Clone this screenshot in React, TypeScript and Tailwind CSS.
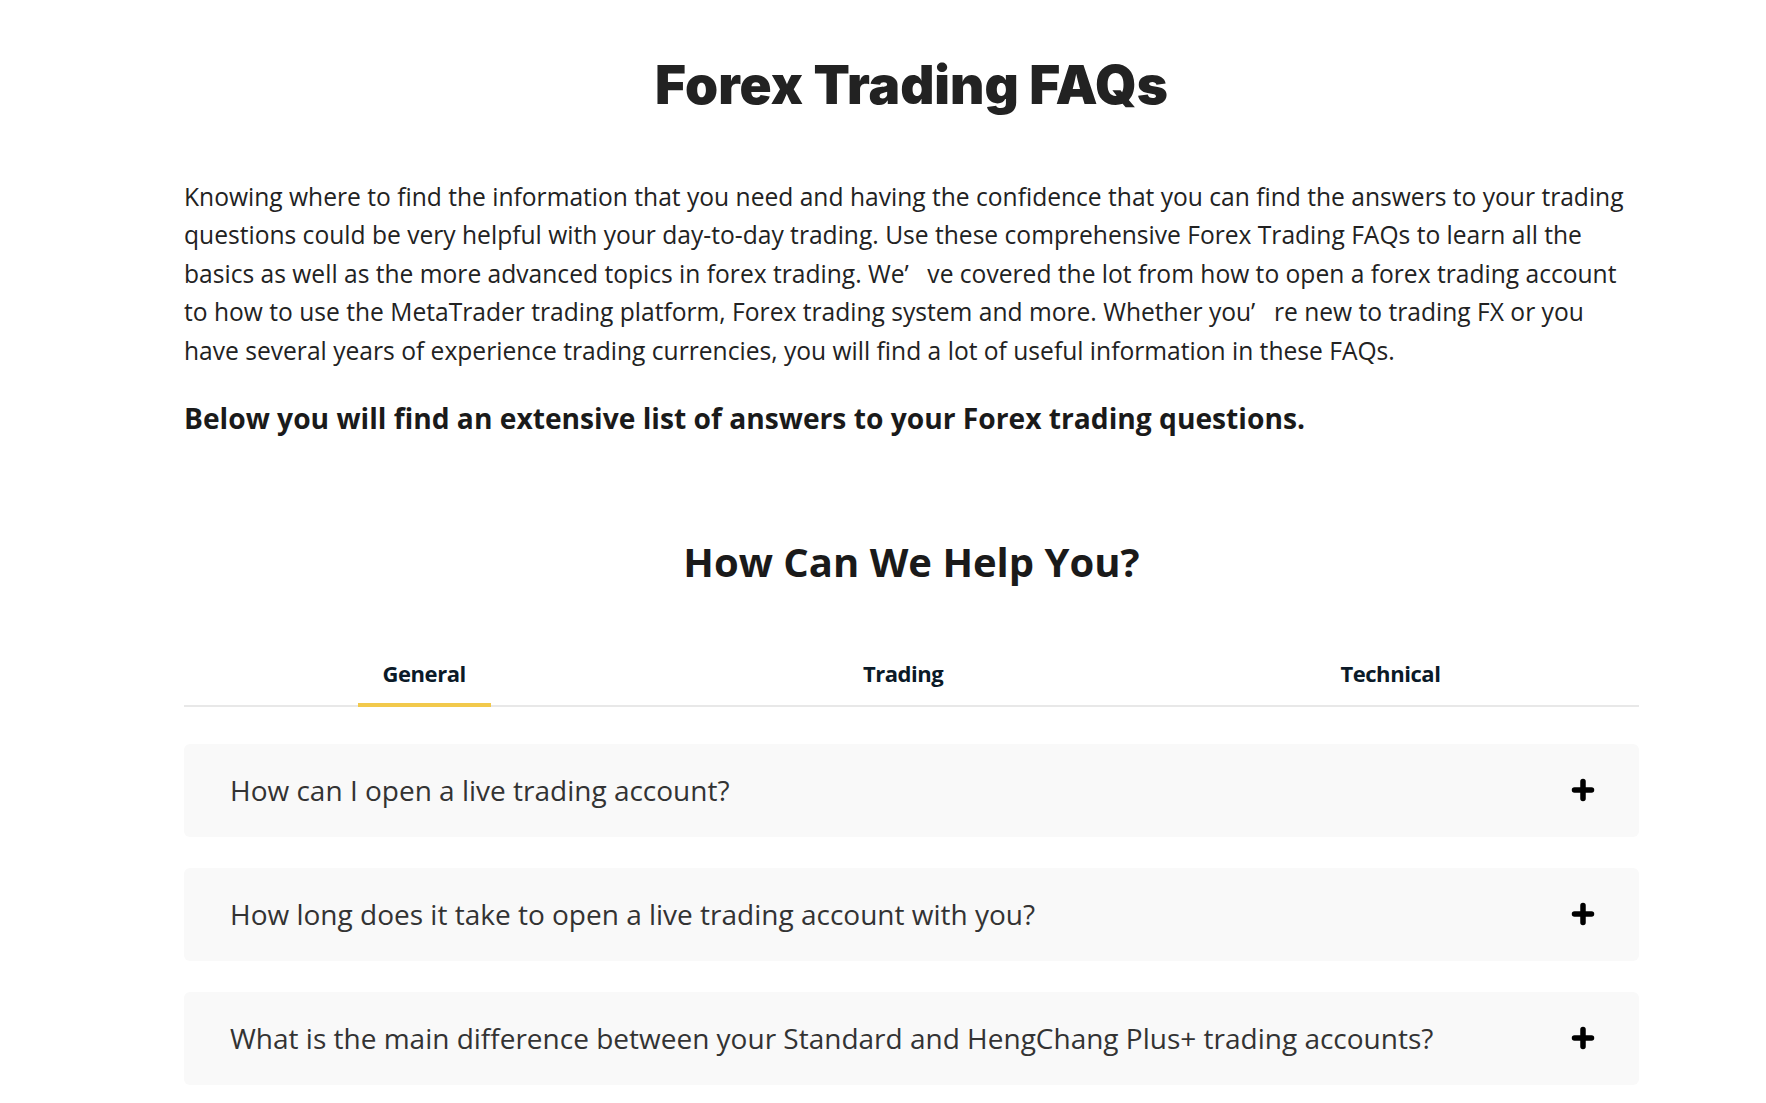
const questions = [
  'How can I open a live trading account?',
  'How long does it take to open a live trading account with you?',
  'What is the main difference between your Standard and HengChang Plus+ trading accounts?',
]

const tabs = ['General', 'Trading', 'Technical']

function PlusIcon() {
  return (
    <svg width="24" height="24" viewBox="0 0 24 24" className="shrink-0">
      <path d="M12 3.5v17M3.5 12h17" stroke="#000" strokeWidth="5.5" strokeLinecap="round" />
    </svg>
  )
}

export default function App() {
  return (
    <div className="min-h-screen bg-white text-[#222] font-['Open_Sans',sans-serif]">
      <div className="ml-[184px] w-[1455px] pt-[55px] pb-10">
        {/* Page title */}
        <h1 className="text-center text-[53px] leading-[61px] font-black text-[#222] font-['Inter',sans-serif]">
          Forex Trading FAQs
        </h1>

        <p className="mt-[62px] pr-[12px] text-[24.6px] leading-[38.4px] text-[#222]">
          Knowing where to find the information that you need and having the confidence that you can find the answers to your trading questions could be very helpful with your day-to-day trading. Use these comprehensive Forex Trading FAQs to learn all the basics as well as the more advanced topics in forex trading. We’&ensp;&nbsp;ve covered the lot from how to open a forex trading account to how to use the MetaTrader trading platform, Forex trading system and more. Whether you’&ensp;&nbsp;re new to trading FX or you have several years of experience trading currencies, you will find a lot of useful information in these FAQs.
        </p>

        <p className="mt-[28px] text-[28.2px] leading-[41.6px] font-bold text-[#1a1a1a]">
          Below you will find an extensive list of answers to your Forex trading questions.
        </p>

        {/* Help section */}
        <h2 className="mt-[98px] text-center text-[40px] leading-[48px] font-bold text-[#1a1a1a]">
          How Can We Help You?
        </h2>

        <div className="mt-[72px] flex justify-around border-b-2 border-[#e8e8e8]">
          {tabs.map((tab, i) => (
            <span
              key={tab}
              className={[
                'px-[25px] pb-[15px] text-[22px] leading-[30px] font-bold tracking-[-0.02em] text-[#0b1a28] -mb-[2px] border-b-4',
                i === 0 ? 'border-[#f2c94c]' : 'border-transparent',
              ].join(' ')}
            >
              {tab}
            </span>
          ))}
        </div>

        <div className="mt-[37px] flex flex-col gap-[31px]">
          {questions.map((q) => (
            <div
              key={q}
              className="h-[93px] rounded-md bg-[#f9f9f9] pl-[46px] pr-[44px] flex items-center justify-between"
            >
              <span className="text-[28px] text-[#333]">{q}</span>
              <PlusIcon />
            </div>
          ))}
        </div>
      </div>
    </div>
  )
}
